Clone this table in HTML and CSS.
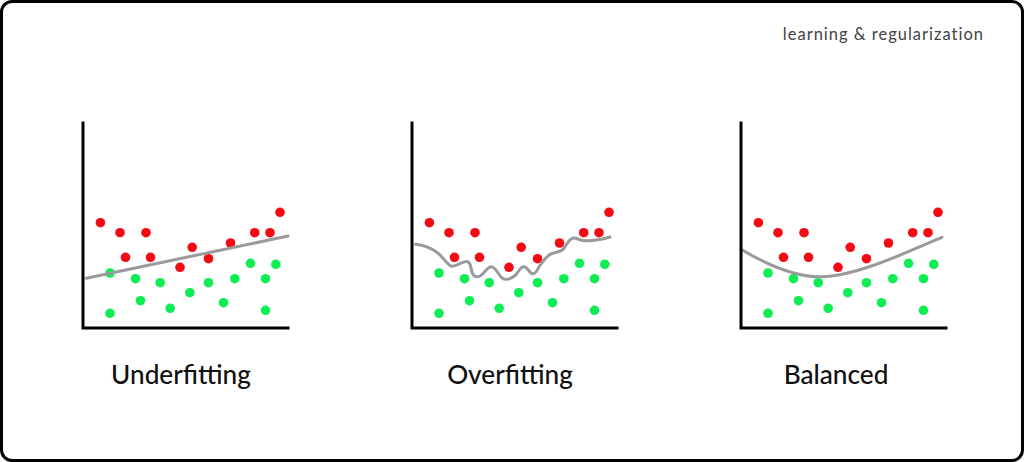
FILE: index.html
```html
<!DOCTYPE html>
<html lang="en">
<head>
<meta charset="utf-8">
<title>Learning &amp; regularization</title>
<link rel="stylesheet" href="styles.css">
</head>
<body>
<div class="frame">
  <div class="tag">learning &amp; regularization</div>
  <div class="plots">
    <figure class="plot">
      <svg class="chart" width="220" height="215" viewBox="0 0 220 215">
        <g class="red">
          <circle cx="29.4" cy="104.7" r="4.8"/><circle cx="49" cy="114.7" r="4.8"/><circle cx="75" cy="114.7" r="4.8"/>
          <circle cx="54.5" cy="139.3" r="4.8"/><circle cx="79.5" cy="139.3" r="4.8"/><circle cx="121.2" cy="129.3" r="4.8"/>
          <circle cx="109" cy="149.3" r="4.8"/><circle cx="137.5" cy="140.7" r="4.8"/><circle cx="159.5" cy="125" r="4.8"/>
          <circle cx="183.7" cy="114.7" r="4.8"/><circle cx="199" cy="114.7" r="4.8"/><circle cx="209" cy="94.3" r="4.8"/>
        </g>
        <g class="green">
          <circle cx="39" cy="155" r="4.8"/><circle cx="64.5" cy="160.7" r="4.8"/><circle cx="89.2" cy="164.7" r="4.8"/>
          <circle cx="118.8" cy="174.7" r="4.8"/><circle cx="137.5" cy="164.7" r="4.8"/><circle cx="163.8" cy="160.7" r="4.8"/>
          <circle cx="179.5" cy="145.3" r="4.8"/><circle cx="204.8" cy="146.3" r="4.8"/><circle cx="194.5" cy="160.7" r="4.8"/>
          <circle cx="69.5" cy="182.7" r="4.8"/><circle cx="99.2" cy="190.3" r="4.8"/><circle cx="152.5" cy="184.7" r="4.8"/>
          <circle cx="39" cy="195.3" r="4.8"/><circle cx="194.5" cy="192.3" r="4.8"/>
        </g>
        <path class="fit" d="M15.3 160.3 L217 118"/>
        <path class="axis" d="M12 5 V210 H217"/>
      </svg>
      <figcaption class="label">Underfitting</figcaption>
    </figure>
    <figure class="plot">
      <svg class="chart" width="220" height="215" viewBox="0 0 220 215">
        <g class="red">
          <circle cx="29.4" cy="104.7" r="4.8"/><circle cx="49" cy="114.7" r="4.8"/><circle cx="75" cy="114.7" r="4.8"/>
          <circle cx="54.5" cy="139.3" r="4.8"/><circle cx="79.5" cy="139.3" r="4.8"/><circle cx="121.2" cy="129.3" r="4.8"/>
          <circle cx="109" cy="149.3" r="4.8"/><circle cx="137.5" cy="140.7" r="4.8"/><circle cx="159.5" cy="125" r="4.8"/>
          <circle cx="183.7" cy="114.7" r="4.8"/><circle cx="199" cy="114.7" r="4.8"/><circle cx="209" cy="94.3" r="4.8"/>
        </g>
        <g class="green">
          <circle cx="39" cy="155" r="4.8"/><circle cx="64.5" cy="160.7" r="4.8"/><circle cx="89.2" cy="164.7" r="4.8"/>
          <circle cx="118.8" cy="174.7" r="4.8"/><circle cx="137.5" cy="164.7" r="4.8"/><circle cx="163.8" cy="160.7" r="4.8"/>
          <circle cx="179.5" cy="145.3" r="4.8"/><circle cx="204.8" cy="146.3" r="4.8"/><circle cx="194.5" cy="160.7" r="4.8"/>
          <circle cx="69.5" cy="182.7" r="4.8"/><circle cx="99.2" cy="190.3" r="4.8"/><circle cx="152.5" cy="184.7" r="4.8"/>
          <circle cx="39" cy="195.3" r="4.8"/><circle cx="194.5" cy="192.3" r="4.8"/>
        </g>
        <path class="fit" d="M15.7 126.3 C22 127 30 129 37.4 134.7 C42 138 46 145 50.7 148 C55 150 62 143 67 143.5 C71 144 70.5 150 72.4 155.3 C74 159 77 159.5 80 158 C84 156 87 149 91 148.7 C96 148.5 98 157 102.4 160.3 C106 163 112 160 115.7 157 C119 153 120.5 148.5 124 148.7 C128 149 129.5 156 133 155.8 C137 155.5 138 149 141 146 C145 141 147 137.5 151 136 C156 134 160 134 163 131.5 C166 128 168 122 172.4 120.3 C176 119 178 122 183 122.5 C190 123.5 196 122 201 121.3 C205 120.6 208 119.6 210 119"/>
        <path class="axis" d="M12 5 V210 H217"/>
      </svg>
      <figcaption class="label">Overfitting</figcaption>
    </figure>
    <figure class="plot">
      <svg class="chart" width="220" height="215" viewBox="0 0 220 215">
        <g class="red">
          <circle cx="29.4" cy="104.7" r="4.8"/><circle cx="49" cy="114.7" r="4.8"/><circle cx="75" cy="114.7" r="4.8"/>
          <circle cx="54.5" cy="139.3" r="4.8"/><circle cx="79.5" cy="139.3" r="4.8"/><circle cx="121.2" cy="129.3" r="4.8"/>
          <circle cx="109" cy="149.3" r="4.8"/><circle cx="137.5" cy="140.7" r="4.8"/><circle cx="159.5" cy="125" r="4.8"/>
          <circle cx="183.7" cy="114.7" r="4.8"/><circle cx="199" cy="114.7" r="4.8"/><circle cx="209" cy="94.3" r="4.8"/>
        </g>
        <g class="green">
          <circle cx="39" cy="155" r="4.8"/><circle cx="64.5" cy="160.7" r="4.8"/><circle cx="89.2" cy="164.7" r="4.8"/>
          <circle cx="118.8" cy="174.7" r="4.8"/><circle cx="137.5" cy="164.7" r="4.8"/><circle cx="163.8" cy="160.7" r="4.8"/>
          <circle cx="179.5" cy="145.3" r="4.8"/><circle cx="204.8" cy="146.3" r="4.8"/><circle cx="194.5" cy="160.7" r="4.8"/>
          <circle cx="69.5" cy="182.7" r="4.8"/><circle cx="99.2" cy="190.3" r="4.8"/><circle cx="152.5" cy="184.7" r="4.8"/>
          <circle cx="39" cy="195.3" r="4.8"/><circle cx="194.5" cy="192.3" r="4.8"/>
        </g>
        <path class="fit" d="M12 131.3 C40 148 68 160 95 158.7 C128 157 172 137 213 119.3"/>
        <path class="axis" d="M12 5 V210 H217"/>
      </svg>
      <figcaption class="label label-narrow">Balanced</figcaption>
    </figure>
  </div>
</div>
</body>
</html>
```

FILE: styles.css
```css
html, body {
  margin: 0;
  padding: 0;
  background: #fff;
}

body {
  font-family: "Lato", "Noto Sans", "DejaVu Sans", sans-serif;
}

.frame {
  box-sizing: border-box;
  width: 1024px;
  height: 462px;
  border: 3px solid #000;
  border-radius: 12px;
  padding: 21px 38px 0 0;
  display: flex;
  flex-direction: column;
  overflow: hidden;
}

.tag {
  align-self: flex-end;
  font-size: 16.5px;
  line-height: 20px;
  color: #444;
  letter-spacing: 1px;
  margin-right: -1px;
}

.plots {
  display: flex;
  gap: 109px;
  padding-left: 68px;
  margin-top: 74px;
}

.plot {
  margin: 0;
  width: 220px;
  display: flex;
  flex-direction: column;
  align-items: center;
}

.chart {
  display: block;
}

.red circle {
  fill: #f50a14;
}

.green circle {
  fill: #10ec54;
}

.fit {
  fill: none;
  stroke: #9a9a9a;
  stroke-width: 3;
  stroke-linecap: round;
  stroke-linejoin: round;
}

.axis {
  fill: none;
  stroke: #000;
  stroke-width: 3;
  stroke-linecap: square;
  stroke-linejoin: miter;
}

.label {
  margin-top: 25px;
  font-size: 26.2px;
  line-height: 32px;
  color: #111;
  font-weight: 500;
}

.label-narrow {
  margin-right: 6px;
}
```
